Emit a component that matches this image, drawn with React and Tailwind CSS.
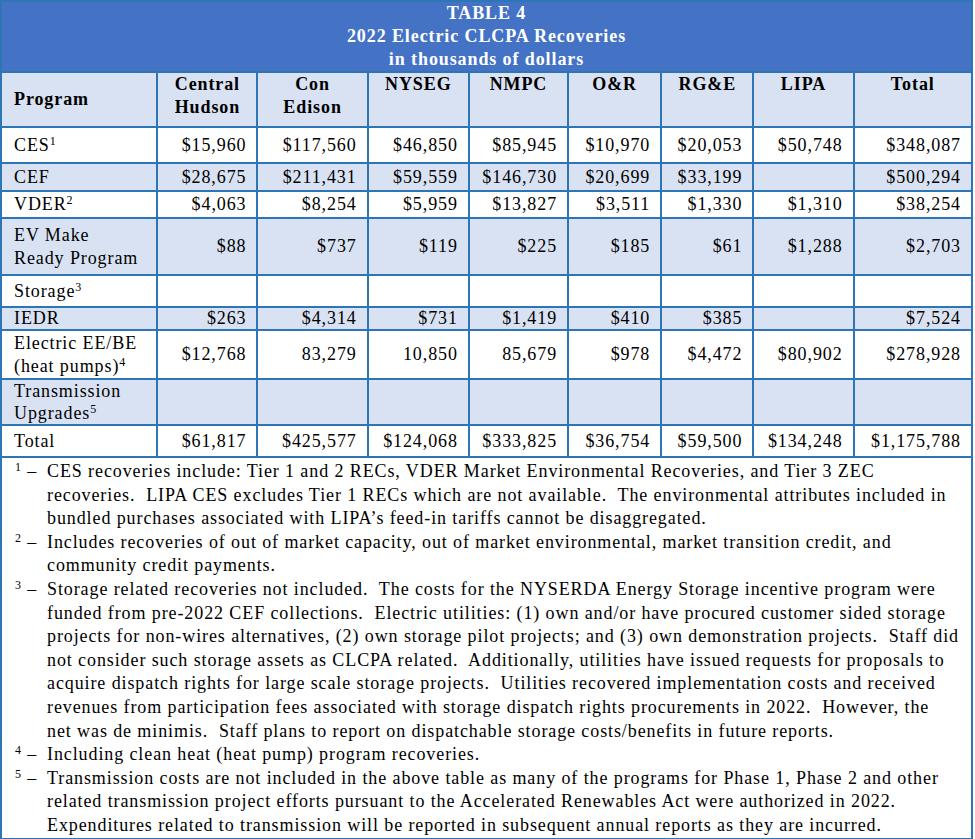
import React from 'react';

const cols = ['Central Hudson', 'Con Edison', 'NYSEG', 'NMPC', 'O&R', 'RG&E', 'LIPA', 'Total'];
const widths = ['w-[156px]', 'w-[100px]', 'w-[110px]', 'w-[101px]', 'w-[99px]', 'w-[93px]', 'w-[92px]', 'w-[100px]', 'w-[118px]'];

const rows = [
  { name: ['CES', '1'], h: 'h-[36px]', vals: ['$15,960', '$117,560', '$46,850', '$85,945', '$10,970', '$20,053', '$50,748', '$348,087'] },
  { name: ['CEF'], h: 'h-[28px]', shade: true, vals: ['$28,675', '$211,431', '$59,559', '$146,730', '$20,699', '$33,199', '', '$500,294'] },
  { name: ['VDER', '2'], h: 'h-[27px]', vals: ['$4,063', '$8,254', '$5,959', '$13,827', '$3,511', '$1,330', '$1,310', '$38,254'] },
  { name: ['EV Make Ready Program'], h: 'h-[57px]', shade: true, vals: ['$88', '$737', '$119', '$225', '$185', '$61', '$1,288', '$2,703'] },
  { name: ['Storage', '3'], h: 'h-[32px]', vals: ['', '', '', '', '', '', '', ''] },
  { name: ['IEDR'], h: 'h-[23px]', lh: 'leading-[19px]', shade: true, vals: ['$263', '$4,314', '$731', '$1,419', '$410', '$385', '', '$7,524'] },
  { name: ['Electric EE/BE (heat pumps)', '4'], h: 'h-[49px]', vals: ['$12,768', '83,279', '10,850', '85,679', '$978', '$4,472', '$80,902', '$278,928'] },
  { name: ['Transmission Upgrades', '5'], h: 'h-[44px]', lh: 'leading-[22px]', shade: true, vals: ['', '', '', '', '', '', '', ''] },
  { name: ['Total'], h: 'h-[32px]', vals: ['$61,817', '$425,577', '$124,068', '$333,825', '$36,754', '$59,500', '$134,248', '$1,175,788'] },
];

const notes = [
  {
    n: '1',
    lines: [
      'CES recoveries include: Tier 1 and 2 RECs, VDER Market Environmental Recoveries, and Tier 3 ZEC',
      'recoveries.  LIPA CES excludes Tier 1 RECs which are not available.  The environmental attributes included in',
      'bundled purchases associated with LIPA\u2019s feed-in tariffs cannot be disaggregated.',
    ],
  },
  {
    n: '2',
    lines: [
      'Includes recoveries of out of market capacity, out of market environmental, market transition credit, and',
      'community credit payments.',
    ],
  },
  {
    n: '3',
    lines: [
      'Storage related recoveries not included.  The costs for the NYSERDA Energy Storage incentive program were',
      'funded from pre-2022 CEF collections.  Electric utilities: (1) own and/or have procured customer sided storage',
      'projects for non-wires alternatives, (2) own storage pilot projects; and (3) own demonstration projects.  Staff did',
      'not consider such storage assets as CLCPA related.  Additionally, utilities have issued requests for proposals to',
      'acquire dispatch rights for large scale storage projects.  Utilities recovered implementation costs and received',
      'revenues from participation fees associated with storage dispatch rights procurements in 2022.  However, the',
      'net was de minimis.  Staff plans to report on dispatchable storage costs/benefits in future reports.',
    ],
  },
  { n: '4', lines: ['Including clean heat (heat pump) program recoveries.'] },
  {
    n: '5',
    lines: [
      'Transmission costs are not included in the above table as many of the programs for Phase 1, Phase 2 and other',
      'related transmission project efforts pursuant to the Accelerated Renewables Act were authorized in 2022.',
      'Expenditures related to transmission will be reported in subsequent annual reports as they are incurred.',
    ],
  },
];

const cell = 'border-2 border-[#2E75B6]';

export default function App() {
  return (
    <div className="w-[975px] h-[839px] bg-white text-black [font-family:'Liberation_Serif',serif] text-[18px] tracking-[0.9px]">
      <table className="border-collapse w-[973px] table-fixed">
        <colgroup>
          {widths.map((w, i) => (
            <col key={i} className={w} />
          ))}
        </colgroup>
        <tbody>
          <tr>
            <td colSpan={9} className={`${cell} bg-[#4472C4] text-white font-bold text-center h-[70px] leading-[23px] align-middle`}>
              <div>TABLE 4</div>
              <div>2022 Electric CLCPA Recoveries</div>
              <div>in thousands of dollars</div>
            </td>
          </tr>
          <tr className="bg-[#D9E2F3] font-bold leading-[23px]">
            <td className={`${cell} h-[55px] pl-3 align-middle`}>Program</td>
            {cols.map((c) => (
              <td key={c} className={`${cell} align-top text-center pt-0`}>
                {c.split(' ').map((w) => (
                  <div key={w}>{w}</div>
                ))}
              </td>
            ))}
          </tr>
          {rows.map((r) => {
            const words = r.name[0];
            const lh = r.lh || 'leading-[23px]';
            return (
              <tr key={words} className={r.shade ? 'bg-[#D9E2F3]' : 'bg-white'}>
                <td className={`${cell} ${r.h} ${lh} pl-3 pr-1 align-middle`}>
                  {words === 'EV Make Ready Program' ? (
                    <>
                      <div>EV Make</div>
                      <div>Ready Program</div>
                    </>
                  ) : words === 'Electric EE/BE (heat pumps)' ? (
                    <>
                      <div>Electric EE/BE</div>
                      <div>
                        (heat pumps)<sup className="text-[12px]">{r.name[1]}</sup>
                      </div>
                    </>
                  ) : words === 'Transmission Upgrades' ? (
                    <>
                      <div>Transmission</div>
                      <div>
                        Upgrades<sup className="text-[12px]">{r.name[1]}</sup>
                      </div>
                    </>
                  ) : (
                    <span>
                      {words}
                      {r.name[1] && <sup className="text-[12px]">{r.name[1]}</sup>}
                    </span>
                  )}
                </td>
                {r.vals.map((v, i) => (
                  <td key={i} className={`${cell} ${lh} text-right pr-[10px] align-middle`}>
                    {v}
                  </td>
                ))}
              </tr>
            );
          })}
          <tr>
            <td colSpan={9} className={`${cell} pt-[2px] pb-0 align-top leading-[23.6px]`}>
              {notes.map((note) => (
                <div key={note.n} className="flex">
                  <div className="w-[45px] shrink-0 pl-[13px] whitespace-pre">
                    <sup className="text-[12px]">{note.n}</sup> {'\u2013'}
                  </div>
                  <div>
                    {note.lines.map((l, i) => (
                      <div key={i} className="whitespace-pre">
                        {l}
                      </div>
                    ))}
                  </div>
                </div>
              ))}
            </td>
          </tr>
        </tbody>
      </table>
    </div>
  );
}
